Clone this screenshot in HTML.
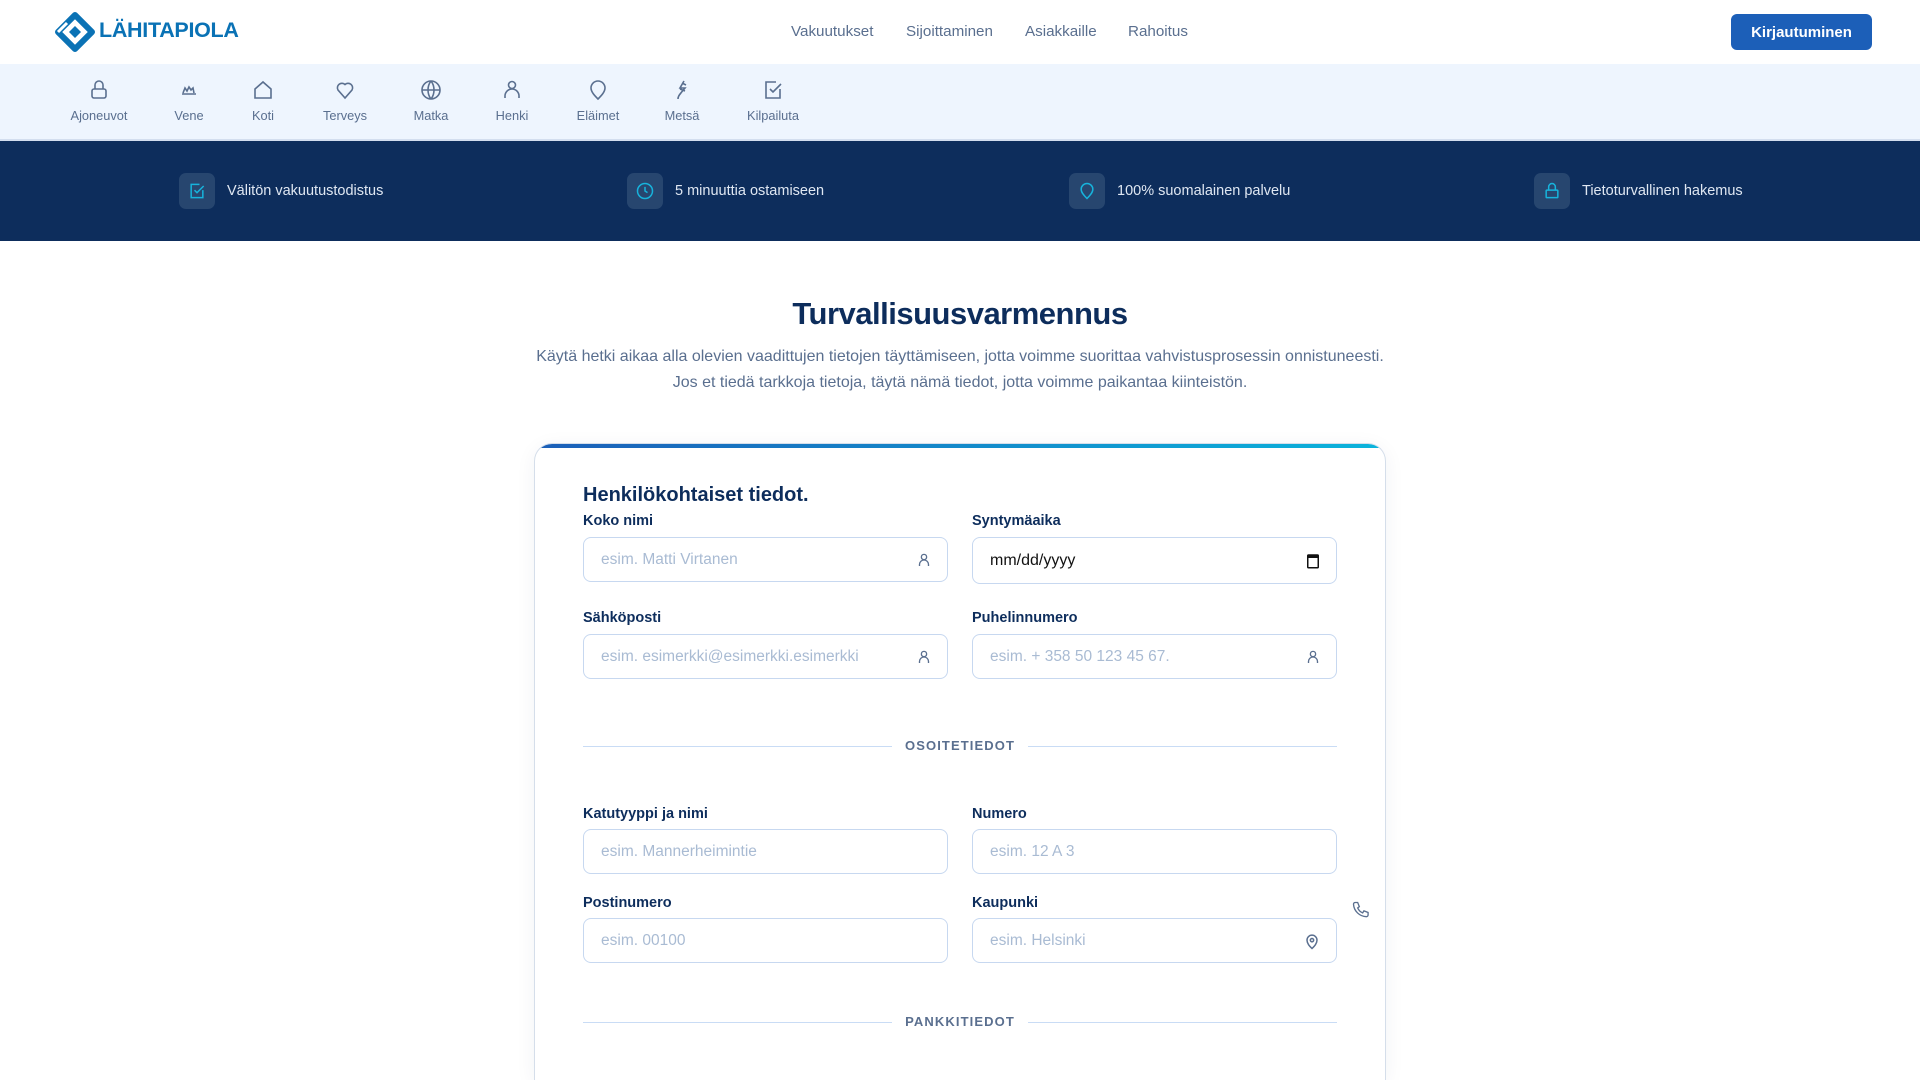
<!DOCTYPE html>
<html style="overflow:hidden;height:1080px"><head><meta charset="utf-8"><style>
*{box-sizing:border-box;margin:0;padding:0}
body{width:1920px;height:1080px;overflow:hidden;background:#fff;font-family:"Liberation Sans",Arial,sans-serif;position:relative}
.a{position:absolute}
.nav{font-size:15.2px;color:#5a6f8f;top:23px}
.sub{top:64px;left:0;width:1920px;height:77px;background:#eef5fe;border-bottom:2px solid #d3deef}
.si{position:absolute;top:14px;width:90px;margin-left:-45px;text-align:center;font-size:12.8px;color:#5a6f8f}
.si svg{display:block;margin:0 auto 6px;width:24px;height:24px}
.band{top:141px;left:0;width:1920px;height:100px;background:#0d2d5c}
.bi{position:absolute;top:32px;height:36px;display:flex;align-items:center;color:#dfe7f2;font-size:14.5px}
.bi .box{width:36px;height:36px;border-radius:7px;background:#27466f;margin-right:12px;display:flex;align-items:center;justify-content:center}
.card{left:534px;top:443px;width:852px;height:637px;border:1px solid #d5deea;border-bottom:none;border-radius:18px 18px 0 0;overflow:hidden;box-shadow:0 4px 20px rgba(13,45,92,.06)}
.card:before{content:"";position:absolute;left:0;top:0;right:0;height:4px;background:linear-gradient(90deg,#1c5fb8,#0bb4dc)}
.lbl{font-size:14.5px;font-weight:bold;color:#0d2d5c}
.in{border:1px solid #c7d8f0;border-radius:8px;height:45px;width:365px;font-size:15.5px;color:#a9bbd3;padding-left:17px;display:flex;align-items:center}
.in svg{position:absolute;right:14px;top:13px}
.div{height:1px;background:#c9dcf5;width:309px}
.dt{font-size:13px;font-weight:bold;color:#5a6f8f;letter-spacing:1.1px;width:138px;text-align:center}
</style></head><body>
<svg class="a" style="left:55px;top:12px" width="40" height="40" viewBox="0 0 40 40"><path d="M20 3 L37 20 L20 37 L3 20 Z" fill="none" stroke="#0a72b5" stroke-width="6" stroke-linejoin="round"/><path d="M20 14 L26 20 L20 26 L14 20Z" fill="#0a72b5"/><path d="M3 20 L12 11" stroke="#fff" stroke-width="3"/></svg>
<div class="a" style="left:99px;top:18px;font-size:21.5px;font-weight:bold;color:#0a72b5;letter-spacing:-0.3px">LÄHITAPIOLA</div>
<div class="a nav" style="left:791px">Vakuutukset</div>
<div class="a nav" style="left:906px">Sijoittaminen</div>
<div class="a nav" style="left:1025px">Asiakkaille</div>
<div class="a nav" style="left:1128px">Rahoitus</div>
<div class="a" style="left:1731px;top:14px;width:141px;height:36px;background:#1c5fb8;border-radius:6px;color:#fff;font-weight:bold;font-size:15px;display:flex;align-items:center;justify-content:center">Kirjautuminen</div>
<div class="a sub">
<div class="si" style="left:99px"><svg viewBox="0 0 24 24" fill="none" stroke="#5a6f8f" stroke-width="1.6"><rect x="5" y="11" width="14" height="9" rx="2"/><path d="M8 11V7a4 4 0 0 1 8 0v4"/></svg>Ajoneuvot</div>
<div class="si" style="left:189px"><svg viewBox="0 0 24 24" fill="none" stroke="#5a6f8f" stroke-width="1.6"><path d="M5 16h14M6 15l2-5 2 3 2-4 2 3 2-2 1 5"/></svg>Vene</div>
<div class="si" style="left:263px"><svg viewBox="0 0 24 24" fill="none" stroke="#5a6f8f" stroke-width="1.6"><path d="M4 20V11l8-7 8 7v9z"/></svg>Koti</div>
<div class="si" style="left:345px"><svg viewBox="0 0 24 24" fill="none" stroke="#5a6f8f" stroke-width="1.6"><path d="M12 20l-7-8a4.5 4.5 0 0 1 7-5.5A4.5 4.5 0 0 1 19 12z"/></svg>Terveys</div>
<div class="si" style="left:431px"><svg viewBox="0 0 24 24" fill="none" stroke="#5a6f8f" stroke-width="1.6"><circle cx="12" cy="12" r="9"/><path d="M3 12h18M12 3c-4 5-4 13 0 18M12 3c4 5 4 13 0 18"/></svg>Matka</div>
<div class="si" style="left:512px"><svg viewBox="0 0 24 24" fill="none" stroke="#5a6f8f" stroke-width="1.6"><circle cx="12" cy="7" r="3.5"/><path d="M5 20v-2a5 5 0 0 1 14 0v2"/></svg>Henki</div>
<div class="si" style="left:598px"><svg viewBox="0 0 24 24" fill="none" stroke="#5a6f8f" stroke-width="1.6"><path d="M12 21c-3-3-7-7-7-11a7 7 0 0 1 14 0c0 4-4 8-7 11z"/></svg>Eläimet</div>
<div class="si" style="left:682px"><svg viewBox="0 0 24 24" fill="none" stroke="#5a6f8f" stroke-width="1.6"><path d="M14 3l-4 7h5l-5 6M8 21c0-3 2-5 3-6M12 5l4 2M10 11l5 2"/></svg>Metsä</div>
<div class="si" style="left:773px"><svg viewBox="0 0 24 24" fill="none" stroke="#5a6f8f" stroke-width="1.6"><path d="M19 11v9H5V4h10"/><path d="M9 11l3 3 8-8"/></svg>Kilpailuta</div>
</div>
<div class="a band">
<div class="bi" style="left:179px"><div class="box"><svg width="20" height="20" viewBox="0 0 24 24" fill="none" stroke="#17b3dc" stroke-width="1.8"><path d="M19 11v9H5V4h10"/><path d="M9 11l3 3 8-8"/></svg></div>Välitön vakuutustodistus</div>
<div class="bi" style="left:627px"><div class="box"><svg width="20" height="20" viewBox="0 0 24 24" fill="none" stroke="#17b3dc" stroke-width="1.8"><circle cx="12" cy="12" r="9"/><path d="M12 7v5l3 2"/></svg></div>5 minuuttia ostamiseen</div>
<div class="bi" style="left:1069px"><div class="box"><svg width="20" height="20" viewBox="0 0 24 24" fill="none" stroke="#17b3dc" stroke-width="1.8"><path d="M12 21c-3-3-7-7-7-11a7 7 0 0 1 14 0c0 4-4 8-7 11z"/></svg></div>100% suomalainen palvelu</div>
<div class="bi" style="left:1534px"><div class="box"><svg width="20" height="20" viewBox="0 0 24 24" fill="none" stroke="#17b3dc" stroke-width="1.8"><rect x="5" y="11" width="14" height="9" rx="1"/><path d="M8 11V7a4 4 0 0 1 8 0v4"/></svg></div>Tietoturvallinen hakemus</div>
</div>
<div class="a" style="left:0;width:1920px;top:296px;text-align:center;font-size:31px;font-weight:bold;color:#0d2d5c;letter-spacing:-0.5px">Turvallisuusvarmennus</div>
<div class="a" style="left:0;width:1920px;top:344px;text-align:center;font-size:16px;line-height:26px;color:#5a6f8f">Käytä hetki aikaa alla olevien vaadittujen tietojen täyttämiseen, jotta voimme suorittaa vahvistusprosessin onnistuneesti.<br>Jos et tiedä tarkkoja tietoja, täytä nämä tiedot, jotta voimme paikantaa kiinteistön.</div>
<div class="a card"></div>
<div class="a" style="left:583px;top:484px;font-size:20px;font-weight:bold;color:#0d2d5c">Henkilökohtaiset tiedot.</div>
<div class="a lbl" style="left:583px;top:513px">Koko nimi</div>
<div class="a lbl" style="left:972px;top:513px">Syntymäaika</div>
<div class="a in" style="left:583px;top:537px">esim. Matti Virtanen<svg width="18" height="18" viewBox="0 0 24 24" fill="none" stroke="#5a6f8f" stroke-width="1.8"><circle cx="12" cy="8" r="3.5"/><path d="M6 20v-2a6 6 0 0 1 12 0v2"/></svg></div>
<div class="a in" style="left:972px;top:537px;height:47px;color:#111;font-size:16px">mm/dd/yyyy<svg width="18" height="18" viewBox="0 0 24 24" style="top:14px"><rect x="5" y="4" width="14" height="17" rx="1" fill="none" stroke="#111" stroke-width="2"/><rect x="5" y="4" width="14" height="4" fill="#111"/></svg></div>
<div class="a lbl" style="left:583px;top:610px">Sähköposti</div>
<div class="a lbl" style="left:972px;top:610px">Puhelinnumero</div>
<div class="a in" style="left:583px;top:634px">esim. esimerkki@esimerkki.esimerkki<svg width="18" height="18" viewBox="0 0 24 24" fill="none" stroke="#5a6f8f" stroke-width="1.8"><circle cx="12" cy="8" r="3.5"/><path d="M6 20v-2a6 6 0 0 1 12 0v2"/></svg></div>
<div class="a in" style="left:972px;top:634px">esim. + 358 50 123 45 67.<svg width="18" height="18" viewBox="0 0 24 24" fill="none" stroke="#5a6f8f" stroke-width="1.8"><circle cx="12" cy="8" r="3.5"/><path d="M6 20v-2a6 6 0 0 1 12 0v2"/></svg></div>
<div class="a div" style="left:583px;top:746px"></div><div class="a dt" style="left:891px;top:738px">OSOITETIEDOT</div><div class="a div" style="left:1028px;top:746px"></div>
<div class="a lbl" style="left:583px;top:806px">Katutyyppi ja nimi</div>
<div class="a lbl" style="left:972px;top:806px">Numero</div>
<div class="a in" style="left:583px;top:829px">esim. Mannerheimintie</div>
<div class="a in" style="left:972px;top:829px">esim. 12 A 3</div>
<div class="a lbl" style="left:583px;top:895px">Postinumero</div>
<div class="a lbl" style="left:972px;top:895px">Kaupunki</div>
<div class="a in" style="left:583px;top:918px">esim. 00100</div>
<div class="a in" style="left:972px;top:918px">esim. Helsinki<svg width="20" height="20" viewBox="0 0 24 24" fill="none" stroke="#5a6f8f" stroke-width="1.8" style="top:12px"><path d="M12 21c-3-3-6-6-6-10a6 6 0 0 1 12 0c0 4-3 7-6 10z"/><circle cx="12" cy="11" r="2"/></svg></div>
<svg class="a" style="left:1351px;top:900px" width="20" height="20" viewBox="0 0 24 24" fill="none" stroke="#5a6f8f" stroke-width="1.6"><path d="M5 3h3l2 5-2 1.5a11 11 0 0 0 6 6L15.5 13l5 2v3a2 2 0 0 1-2 2A16 16 0 0 1 3 5a2 2 0 0 1 2-2z"/></svg>
<div class="a div" style="left:583px;top:1022px"></div><div class="a dt" style="left:891px;top:1014px">PANKKITIEDOT</div><div class="a div" style="left:1028px;top:1022px"></div>
</body></html>
